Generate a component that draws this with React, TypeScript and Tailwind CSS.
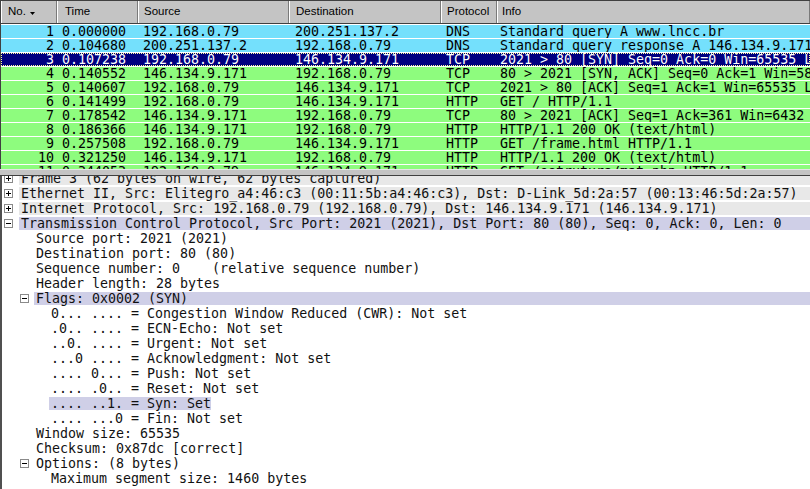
import React from 'react';

type Pkt = {
  no: number;
  time: string;
  src: string;
  dst: string;
  proto: string;
  info: string;
  kind: 'dns' | 'tcp' | 'sel';
};

const packets: Pkt[] = [
  { no: 1, time: '0.000000', src: '192.168.0.79', dst: '200.251.137.2', proto: 'DNS', info: 'Standard query A www.lncc.br', kind: 'dns' },
  { no: 2, time: '0.104680', src: '200.251.137.2', dst: '192.168.0.79', proto: 'DNS', info: 'Standard query response A 146.134.9.171', kind: 'dns' },
  { no: 3, time: '0.107238', src: '192.168.0.79', dst: '146.134.9.171', proto: 'TCP', info: '2021 > 80 [SYN] Seq=0 Ack=0 Win=65535 Len=0 MSS=1460', kind: 'sel' },
  { no: 4, time: '0.140552', src: '146.134.9.171', dst: '192.168.0.79', proto: 'TCP', info: '80 > 2021 [SYN, ACK] Seq=0 Ack=1 Win=5840 Len=0 MSS=1460', kind: 'tcp' },
  { no: 5, time: '0.140607', src: '192.168.0.79', dst: '146.134.9.171', proto: 'TCP', info: '2021 > 80 [ACK] Seq=1 Ack=1 Win=65535 Len=0', kind: 'tcp' },
  { no: 6, time: '0.141499', src: '192.168.0.79', dst: '146.134.9.171', proto: 'HTTP', info: 'GET / HTTP/1.1', kind: 'tcp' },
  { no: 7, time: '0.178542', src: '146.134.9.171', dst: '192.168.0.79', proto: 'TCP', info: '80 > 2021 [ACK] Seq=1 Ack=361 Win=6432 Len=0', kind: 'tcp' },
  { no: 8, time: '0.186366', src: '146.134.9.171', dst: '192.168.0.79', proto: 'HTTP', info: 'HTTP/1.1 200 OK (text/html)', kind: 'tcp' },
  { no: 9, time: '0.257508', src: '192.168.0.79', dst: '146.134.9.171', proto: 'HTTP', info: 'GET /frame.html HTTP/1.1', kind: 'tcp' },
  { no: 10, time: '0.321250', src: '146.134.9.171', dst: '192.168.0.79', proto: 'HTTP', info: 'HTTP/1.1 200 OK (text/html)', kind: 'tcp' },
  { no: 11, time: '0.344053', src: '192.168.0.79', dst: '146.134.9.171', proto: 'HTTP', info: 'GET /estrutura/mat.php HTTP/1.1', kind: 'tcp' },
];

type Node = {
  text: string;
  level: 0 | 1 | 2;
  box?: 'plus' | 'minus';
  bg?: 'gray' | 'lav' | 'lavShort';
};

const tree: Node[] = [
  { text: 'Frame 3 (62 bytes on wire, 62 bytes captured)', level: 0, box: 'plus', bg: 'gray' },
  { text: 'Ethernet II, Src: Elitegro_a4:46:c3 (00:11:5b:a4:46:c3), Dst: D-Link_5d:2a:57 (00:13:46:5d:2a:57)', level: 0, box: 'plus', bg: 'gray' },
  { text: 'Internet Protocol, Src: 192.168.0.79 (192.168.0.79), Dst: 146.134.9.171 (146.134.9.171)', level: 0, box: 'plus', bg: 'gray' },
  { text: 'Transmission Control Protocol, Src Port: 2021 (2021), Dst Port: 80 (80), Seq: 0, Ack: 0, Len: 0', level: 0, box: 'minus', bg: 'lav' },
  { text: 'Source port: 2021 (2021)', level: 1 },
  { text: 'Destination port: 80 (80)', level: 1 },
  { text: 'Sequence number: 0    (relative sequence number)', level: 1 },
  { text: 'Header length: 28 bytes', level: 1 },
  { text: 'Flags: 0x0002 (SYN)', level: 1, box: 'minus', bg: 'lav' },
  { text: '0... .... = Congestion Window Reduced (CWR): Not set', level: 2 },
  { text: '.0.. .... = ECN-Echo: Not set', level: 2 },
  { text: '..0. .... = Urgent: Not set', level: 2 },
  { text: '...0 .... = Acknowledgment: Not set', level: 2 },
  { text: '.... 0... = Push: Not set', level: 2 },
  { text: '.... .0.. = Reset: Not set', level: 2 },
  { text: '.... ..1. = Syn: Set', level: 2, bg: 'lavShort' },
  { text: '.... ...0 = Fin: Not set', level: 2 },
  { text: 'Window size: 65535', level: 1 },
  { text: 'Checksum: 0x87dc [correct]', level: 1 },
  { text: 'Options: (8 bytes)', level: 1, box: 'minus' },
  { text: 'Maximum segment size: 1460 bytes', level: 2 },
];

const mono = "font-['DejaVu_Sans_Mono','Liberation_Mono',monospace] text-[13.3px] leading-[13px]";

function ExpandBox({ type }: { type: 'plus' | 'minus' }) {
  return (
    <svg width="9" height="9" viewBox="0 0 9 9" className="block">
      <rect x="0.5" y="0.5" width="8" height="8" fill="#fff" stroke="#8a8a8a" />
      <line x1="2" y1="4.5" x2="7" y2="4.5" stroke="#000" />
      {type === 'plus' && <line x1="4.5" y1="2" x2="4.5" y2="7" stroke="#000" />}
    </svg>
  );
}

function HeaderCell({ label, w, pl, arrow }: { label: string; w: string; pl: string; arrow?: boolean }) {
  return (
    <div
      className={`${w} ${pl} h-full flex items-center shrink-0 border-l border-l-white border-r border-r-[#7a7a7a] bg-[#c4c4c4] font-['Liberation_Sans',Arial,sans-serif] text-[11.5px] text-black`}
    >
      {label}
      {arrow && (
        <svg width="5" height="3" viewBox="0 0 5 3" className="ml-[4px] mt-[3px]">
          <polygon points="0,0 5,0 2.5,3" fill="#000" />
        </svg>
      )}
    </div>
  );
}

export default function App() {
  return (
    <div className="w-[810px] h-[489px] overflow-hidden flex flex-col bg-[#c4c4c4]">
      {/* Packet list */}
      <div className="h-[169px] shrink-0 overflow-hidden border-l border-t border-[#404040] bg-white">
        <div className="h-[23px] flex border-b border-[#404040] bg-[#c4c4c4]">
          <HeaderCell label="No." w="w-[56px]" pl="pl-[6px]" arrow />
          <HeaderCell label="Time" w="w-[81px]" pl="pl-[7px]" />
          <HeaderCell label="Source" w="w-[151px]" pl="pl-[5px]" />
          <HeaderCell label="Destination" w="w-[152px]" pl="pl-[6px]" />
          <HeaderCell label="Protocol" w="w-[56px]" pl="pl-[5px]" />
          <HeaderCell label="Info" w="flex-1" pl="pl-[4px]" />
        </div>
        <div className="pt-px flex flex-col gap-px bg-white">
          {packets.map((p) => {
            const rowCls =
              p.kind === 'sel'
                ? 'bg-[#000080] text-white outline outline-1 outline-dotted outline-[#ffff9c] -outline-offset-1'
                : p.kind === 'dns'
                ? 'bg-[#74e0fc] text-black'
                : 'bg-[#8efc7e] text-black';
            return (
              <div key={p.no} className={`h-[13px] flex whitespace-pre overflow-hidden ${mono} ${rowCls}`}>
                <div className="w-[56px] shrink-0 text-right pr-[3px]">{p.no}</div>
                <div className="w-[81px] shrink-0 pl-[5px]">{p.time}</div>
                <div className="w-[151px] shrink-0 pl-[5px]">{p.src}</div>
                <div className="w-[152px] shrink-0 pl-[6px]">{p.dst}</div>
                <div className="w-[56px] shrink-0 pl-[5px]">{p.proto}</div>
                <div className="flex-1 pl-[3px] overflow-hidden">{p.info}</div>
              </div>
            );
          })}
        </div>
      </div>

      {/* Splitter */}
      <div className="h-[7px] shrink-0 bg-[#c4c4c4] border-t border-t-[#e6e6e6] border-b border-b-[#404040]" />

      {/* Packet details */}
      <div className="flex-1 overflow-hidden bg-white border-l-2 border-[#505050]">
        <div className="-mt-[5px] flex flex-col">
          {tree.map((n, i) => {
            const boxLeft = n.level === 0 ? 'pl-[2px]' : 'pl-[18px]';
            const textLeft = n.level === 0 ? 'pl-[17px]' : n.level === 1 ? 'pl-[32px]' : 'pl-[47px]';
            const bgCls =
              n.bg === 'gray'
                ? 'bg-[#e8e8e8] flex-1'
                : n.bg === 'lav'
                ? 'bg-[#cfcfe7] flex-1'
                : n.bg === 'lavShort'
                ? 'bg-[#cfcfe7] w-[162px]'
                : '';
            return (
              <div key={i} className="h-[15px] relative flex items-center whitespace-pre">
                {n.box && (
                  <div className={`absolute left-0 top-[3px] ${boxLeft}`}>
                    <ExpandBox type={n.box} />
                  </div>
                )}
                <div className={`flex ${textLeft} flex-1`}>
                  <div className={`h-[13px] pl-[2px] text-[#111] ${mono} ${bgCls}`}>{n.text}</div>
                </div>
              </div>
            );
          })}
        </div>
      </div>
    </div>
  );
}
